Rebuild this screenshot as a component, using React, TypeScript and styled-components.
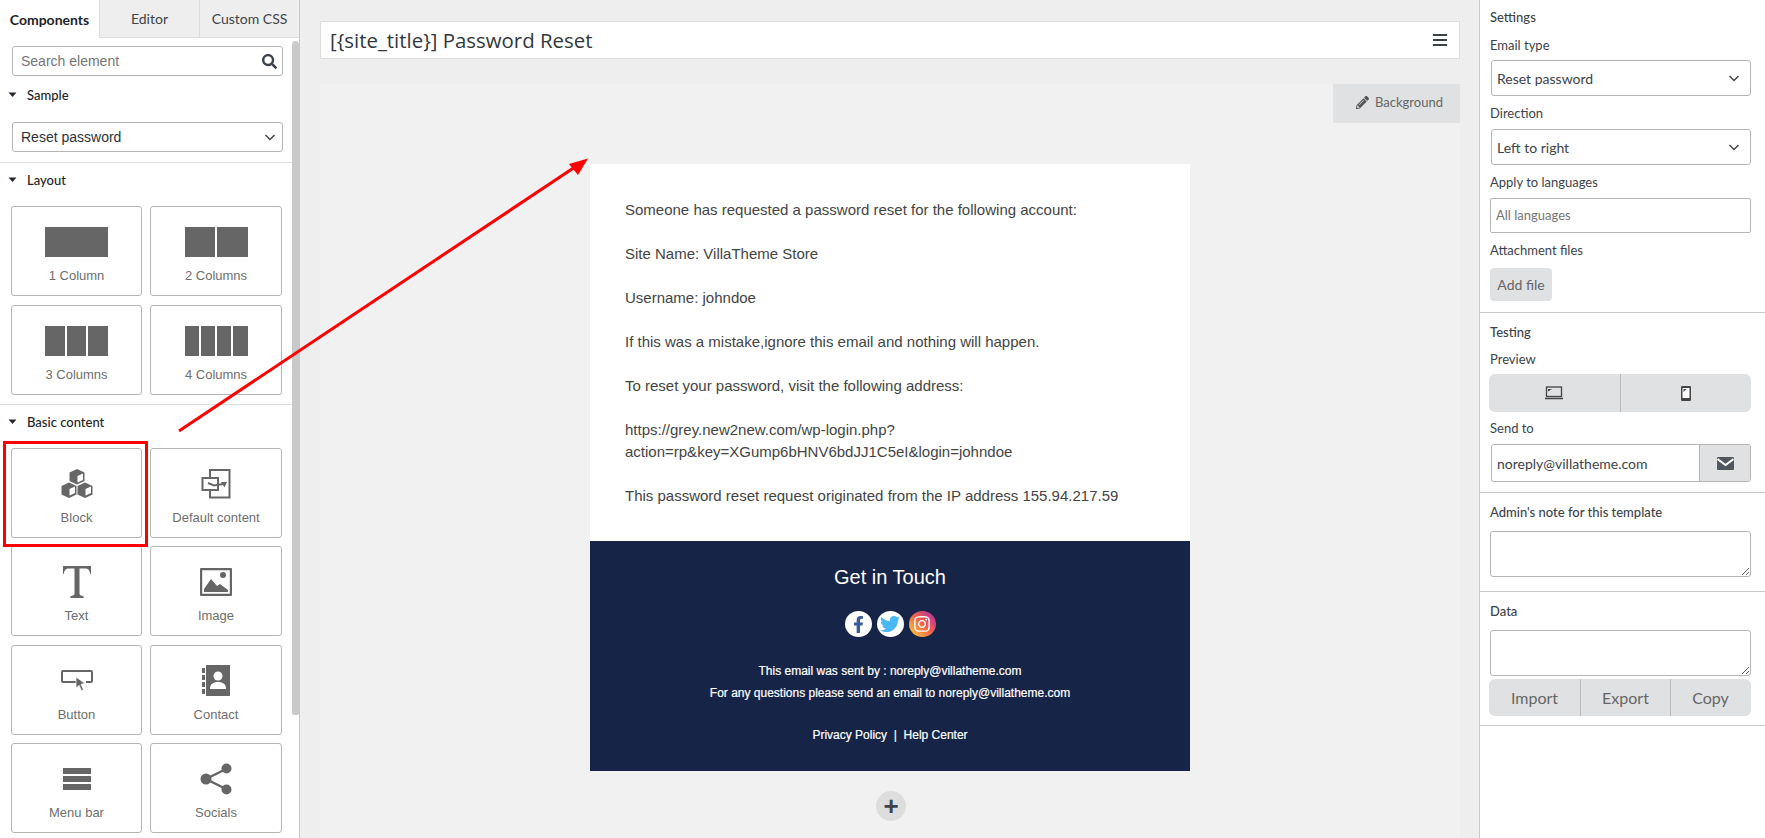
import styled, { createGlobalStyle } from 'styled-components'
import { FaFacebookF, FaInstagram, FaPencilAlt, FaSearch, FaTwitter } from 'react-icons/fa'

const GlobalStyle = createGlobalStyle`
  * { box-sizing: border-box; }
  html, body { margin: 0; padding: 0; height: 100%; overflow: hidden; }
  body { font-family: "Liberation Sans", Arial, sans-serif; color: #3c434a; background: #eee; }
`

const Chevron = () => (
  <svg width="14" height="14" viewBox="0 0 14 14" fill="none" stroke="#444" strokeWidth="1.5">
    <path d="M2.5 5l4.5 4.5L11.500 5" />
  </svg>
)

const Caret = () => (
  <svg width="10" height="6" viewBox="0 0 10 6" fill="#23282d">
    <path d="M0.500 0.500h8L4.500 5z" />
  </svg>
)

const BlockIcon = () => (
  <svg width="32" height="30" viewBox="0 0 32 30">
    <g fill="#666">
      <path d="M16 0l7.500 3.500v8.500L16 15.500l-7.500-3.500V3.500z" />
      <path d="M8 13.500l7.500 3.500v8.500L8 29l-7.500-3.500V17z" />
      <path d="M24 13.500l7.500 3.500v8.500L24 29l-7.500-3.500V17z" />
    </g>
    <g fill="#fff">
      <path d="M16.500 7l5.500-2.500v6.500l-5.500 2.500z" />
      <path d="M8.500 20l5.500-2.500v6.500l-5.500 2.500z" />
      <path d="M24.500 20l5.500-2.500v6.500l-5.500 2.500z" />
    </g>
  </svg>
)

const DefaultContentIcon = () => (
  <svg width="30" height="30" viewBox="0 0 30 30" fill="none" stroke="#666" strokeWidth="2">
    <path d="M9 9V1h19.500v27.500H9v-7" />
    <path d="M1.500 9h15.500v12H1.500z" fill="#fff" />
    <path d="M7 14l6 2.500 9-1.500" />
    <path d="M20 13l6 0-2.500 5.500z" fill="#666" stroke="none" />
  </svg>
)

const TextIcon = () => (
  <svg width="28" height="32" viewBox="0 0 28 32" fill="#666">
    <path d="M0 0h28l.3 8h-1c-.8-4-2-5.500-5.500-5.500h-5.300v25c0 1.600 1 2.300 4 2.500v2H7.500v-2c3-.2 4-.9 4-2.500v-25H6.200C2.700 2.500 1.500 4 .7 8h-1z" />
  </svg>
)

const ImageIcon = () => (
  <svg width="32" height="28" viewBox="0 0 32 28">
    <rect x="1" y="1" width="30" height="26" rx="1" fill="none" stroke="#666" strokeWidth="2.400" />
    <circle cx="23" cy="7" r="3" fill="#666" />
    <path d="M4 24v-3l7-10 6 7 3-2 8 6v2z" fill="#666" />
  </svg>
)

const ButtonIcon = () => (
  <svg width="32" height="22" viewBox="0 0 32 22" fill="none">
    <path d="M16 12H2a1 1 0 0 1-1-1V2a1 1 0 0 1 1-1h28a1 1 0 0 1 1 1v9a1 1 0 0 1-1 1h-5" stroke="#666" strokeWidth="2" />
    <path d="M15 7l9 6.500-4 .8 2.500 5.500-2 .9-2.500-5.500-3 3z" fill="#666" stroke="#fff" strokeWidth=".7" />
  </svg>
)

const ContactIcon = () => (
  <svg width="28" height="32" viewBox="0 0 28 32">
    <path d="M4 0h24v31H4z" fill="#666" />
    <path d="M0 3h3v5H0zM0 10h3v5H0zM0 17h3v5H0zM0 24h3v5H0z" fill="#666" />
    <circle cx="16" cy="11" r="4.500" fill="#fff" />
    <path d="M8 24c0-5 3-7 8-7s8 2 8 7z" fill="#fff" />
  </svg>
)

const MenuBarIcon = () => (
  <svg width="28" height="22" viewBox="0 0 28 22" fill="#666">
    <rect width="28" height="6" />
    <rect y="8" width="28" height="6" />
    <rect y="16" width="28" height="6" />
  </svg>
)

const ShareIcon = () => (
  <svg width="32" height="32" viewBox="0 0 32 32">
    <path d="M26 6L6 16l20 10" fill="none" stroke="#666" strokeWidth="2.500" />
    <circle cx="26.500" cy="5.500" r="5" fill="#666" />
    <circle cx="6" cy="16" r="5.500" fill="#666" />
    <circle cx="26.500" cy="26.500" r="5" fill="#666" />
  </svg>
)

const LaptopIcon = () => (
  <svg width="18" height="14" viewBox="0 0 18 14" fill="none" stroke="#444">
    <rect x="1.500" y="1" width="15" height="9.500" strokeWidth="1.300" />
    <path d="M3 3h4L3 5.500z" fill="#444" stroke="none" />
    <path d="M0 12.500h18" strokeWidth="1.600" />
  </svg>
)

const MobileIcon = () => (
  <svg width="10" height="15" viewBox="0 0 10 15">
    <rect width="10" height="15" rx="1" fill="#444" />
    <rect x="1.500" y="2" width="7" height="10" fill="#fff" />
    <path d="M2.500 3h3l-3 3z" fill="#444" />
  </svg>
)

const MailIcon = () => (
  <svg width="17" height="13" viewBox="0 0 17 13">
    <rect width="17" height="13" rx="1" fill="#50575e" />
    <path d="M0.500 2l8 6 8-6" fill="none" stroke="#fff" strokeWidth="2" />
  </svg>
)

const columns = [
  { label: '1 Column', count: 1 },
  { label: '2 Columns', count: 2 },
  { label: '3 Columns', count: 3 },
  { label: '4 Columns', count: 4 },
]

const basics = [
  { label: 'Block', icon: <BlockIcon /> },
  { label: 'Default content', icon: <DefaultContentIcon /> },
  { label: 'Text', icon: <TextIcon /> },
  { label: 'Image', icon: <ImageIcon /> },
  { label: 'Button', icon: <ButtonIcon /> },
  { label: 'Contact', icon: <ContactIcon /> },
  { label: 'Menu bar', icon: <MenuBarIcon /> },
  { label: 'Socials', icon: <ShareIcon /> },
]

const paragraphs = [
  ['Someone has requested a password reset for the following account:'],
  ['Site Name: VillaTheme Store'],
  ['Username: johndoe'],
  ['If this was a mistake,ignore this email and nothing will happen.'],
  ['To reset your password, visit the following address:'],
  ['https://grey.new2new.com/wp-login.php?', 'action=rp&key=XGump6bHNV6bdJJ1C5eI&login=johndoe'],
  ['This password reset request originated from the IP address 155.94.217.59'],
]

function App() {
  return (
    <Page>
      <GlobalStyle />
      <LeftPanel>
        <Tabs>
          <Tab $active>Components</Tab>
          <Tab>Editor</Tab>
          <Tab>Custom CSS</Tab>
        </Tabs>
        <Scrollbar />
        <LeftBody>
          <SearchBox>
            <span>Search element</span>
            <FaSearch size={15} color="#3c434a" />
          </SearchBox>
          <LeftHeading $top={10}><Caret />Sample</LeftHeading>
          <SampleSelect>
            <span>Reset password</span>
            <Chevron />
          </SampleSelect>
          <LeftDivider />
          <LeftHeading $top={8}><Caret />Layout</LeftHeading>
          <CardGrid $rowGap={9}>
            {columns.map((col) => (
              <Card key={col.label}>
                <ColumnIcon>
                  {Array.from({ length: col.count }).map((_, i) => <i key={i} />)}
                </ColumnIcon>
                <CardLabel>{col.label}</CardLabel>
              </Card>
            ))}
          </CardGrid>
          <LeftDivider $top={9} />
          <LeftHeading $top={8}><Caret />Basic content</LeftHeading>
          <CardGrid $rowGap={8.34}>
            {basics.map((item) => (
              <Card key={item.label}>
                <CardIcon>{item.icon}</CardIcon>
                <CardLabel>{item.label}</CardLabel>
              </Card>
            ))}
          </CardGrid>
        </LeftBody>
      </LeftPanel>

      <Main>
        <TitleBar>
          <TitleText>[{'{'}site_title{'}'}] Password Reset</TitleText>
          <Burger><i /><i /><i /></Burger>
        </TitleBar>
        <Canvas>
          <BackgroundRow>
            <BackgroundButton>
              <FaPencilAlt size={13} color="#555" />
              Background
            </BackgroundButton>
          </BackgroundRow>
          <Email>
            <EmailBody>
              {paragraphs.map((lines) => (
                <p key={lines[0]}>
                  {lines.map((line, i) => <span key={line}>{i > 0 && <br />}{line}</span>)}
                </p>
              ))}
            </EmailBody>
            <EmailFooter>
              <FooterTitle>Get in Touch</FooterTitle>
              <Socials>
                <Social $bg="#fff"><FaFacebookF size={17} color="#3b5998" /></Social>
                <Social $bg="#fff"><FaTwitter size={20} color="#4ab8f5" /></Social>
                <Social $bg="linear-gradient(45deg, #fdc13f 10%, #f5634a 50%, #b5329a 90%)"><FaInstagram size={18} color="#fff" /></Social>
              </Socials>
              <FooterLine>This email was sent by : noreply@villatheme.com</FooterLine>
              <FooterLine>For any questions please send an email to noreply@villatheme.com</FooterLine>
              <FooterLinks>Privacy Policy&nbsp; |&nbsp; Help Center</FooterLinks>
            </EmailFooter>
          </Email>
          <AddRow>+</AddRow>
        </Canvas>
      </Main>

      <RightPanel>
        <Section $top={8} $bottom={11}>
          <Heading>Settings</Heading>
          <FieldLabel $top={10}>Email type</FieldLabel>
          <SelectField $top={6}>Reset password<Chevron /></SelectField>
          <FieldLabel>Direction</FieldLabel>
          <SelectField>Left to right<Chevron /></SelectField>
          <FieldLabel>Apply to languages</FieldLabel>
          <LanguagesField>All languages</LanguagesField>
          <FieldLabel>Attachment files</FieldLabel>
          <AddFile>Add file</AddFile>
        </Section>
        <Section $top={10} $bottom={10}>
          <Heading>Testing</Heading>
          <FieldLabel $top={9}>Preview</FieldLabel>
          <ButtonGroup>
            <GroupButton><LaptopIcon /></GroupButton>
            <GroupButton><MobileIcon /></GroupButton>
          </ButtonGroup>
          <FieldLabel $top={7}>Send to</FieldLabel>
          <SendRow>
            <span>noreply@villatheme.com</span>
            <SendButton><MailIcon /></SendButton>
          </SendRow>
        </Section>
        <Section $top={10} $bottom={14}>
          <Heading>Admin's note for this template</Heading>
          <NoteArea />
        </Section>
        <Section $top={10} $bottom={9}>
          <Heading>Data</Heading>
          <NoteArea />
          <ActionGroup>
            <GroupButton>Import</GroupButton>
            <GroupButton>Export</GroupButton>
            <GroupButton>Copy</GroupButton>
          </ActionGroup>
        </Section>
      </RightPanel>

      <Highlight />
      <Arrow viewBox="0 0 1765 838">
        <path d="M179 431L578 165" stroke="#f00" strokeWidth="3" fill="none" />
        <path d="M588 158.500L569 164l9 11z" fill="#f00" />
      </Arrow>
    </Page>
  )
}

const Page = styled.div`
  position: relative;
  display: flex;
  width: 1765px;
  height: 838px;
  overflow: hidden;
  background: #eee;
`
const LeftPanel = styled.aside`
  position: relative;
  width: 300px;
  flex: none;
  background: #fff;
  border-right: 1px solid #c9c9c9;
  overflow: hidden;
`
const Tabs = styled.div`
  display: flex;
  height: 38px;
  font-family: Lato, sans-serif;
  font-size: 14px;
`
const Tab = styled.div<{ $active?: boolean }>`
  flex: 1;
  display: flex;
  align-items: center;
  justify-content: center;
  background: ${(p) => (p.$active ? '#fff' : '#eee')};
  color: ${(p) => (p.$active ? '#1d2327' : '#3c434a')};
  font-weight: ${(p) => (p.$active ? 700 : 400)};
  border-left: ${(p) => (p.$active ? 'none' : '1px solid #ddd')};
  border-bottom: ${(p) => (p.$active ? 'none' : '1px solid #ddd')};
`
const Scrollbar = styled.div`
  position: absolute;
  top: 41px;
  right: 0;
  width: 7px;
  height: 674px;
  background: #c9c9c9;
  border-radius: 4px 4px 3px 3px;
`
const LeftBody = styled.div`
  width: 292px;
  padding-top: 8px;
`
const inputBox = `
  display: flex;
  align-items: center;
  justify-content: space-between;
  border: 1px solid #b5b5b5;
  border-radius: 3px;
`
const SearchBox = styled.div`
  ${inputBox}
  width: 271px;
  height: 30px;
  margin-left: 12px;
  padding: 0 5px 0 8px;
  font-size: 14px;
  color: #757575;
`
const SampleSelect = styled.div`
  ${inputBox}
  width: 271px;
  height: 30px;
  margin: 18px 0 10px 12px;
  padding: 0 5px 0 8px;
  font-size: 14px;
  color: #2c3338;
`
const LeftHeading = styled.div<{ $top: number }>`
  display: flex;
  align-items: center;
  gap: 9px;
  height: 18px;
  margin-top: ${(p) => p.$top}px;
  padding-left: 8px;
  font-family: Lato, sans-serif;
  font-size: 13px;
  font-weight: 500;
  color: #1d2327;
`
const LeftDivider = styled.div<{ $top?: number }>`
  height: 1px;
  margin-top: ${(p) => p.$top ?? 0}px;
  background: #ddd;
`
const CardGrid = styled.div<{ $rowGap: number }>`
  display: grid;
  grid-template-columns: 131px 132px;
  grid-auto-rows: 90px;
  column-gap: 8px;
  row-gap: ${(p) => p.$rowGap}px;
  margin: 17px 0 0 11px;
`
const Card = styled.div`
  display: flex;
  flex-direction: column;
  align-items: center;
  background: #fff;
  border: 1px solid #b5b5b5;
  border-radius: 3px;
`
const CardIcon = styled.div`
  display: flex;
  align-items: center;
  justify-content: center;
  height: 30px;
  margin-top: 20px;
`
const ColumnIcon = styled.div`
  display: flex;
  gap: 2px;
  width: 63px;
  height: 30px;
  margin-top: 20px;
  i {
    flex: 1;
    background: #666;
  }
`
const CardLabel = styled.div`
  margin-top: 11px;
  font-size: 13px;
  line-height: 16px;
  color: #6e6e6e;
`
const Main = styled.main`
  flex: 1;
  display: flex;
  flex-direction: column;
  padding: 21px 19px 0 20px;
  min-width: 0;
`
const TitleBar = styled.div`
  display: flex;
  align-items: center;
  justify-content: space-between;
  height: 38px;
  flex: none;
  padding: 0 12px 0 9px;
  background: #fff;
  border: 1px solid #ddd;
`
const TitleText = styled.div`
  font-family: "Open Sans", sans-serif;
  font-size: 20.4px;
  color: #32373c;
`
const Burger = styled.div`
  display: flex;
  flex-direction: column;
  gap: 3px;
  width: 14px;
  i {
    height: 2px;
    background: #3c434a;
  }
`
const Canvas = styled.div`
  flex: 1;
  margin-top: 25px;
  background: #f1f1f1;
  min-height: 0;
`
const BackgroundRow = styled.div`
  display: flex;
  justify-content: flex-end;
  height: 80px;
`
const BackgroundButton = styled.div`
  display: flex;
  align-items: center;
  justify-content: center;
  gap: 6px;
  width: 127px;
  height: 39px;
  padding: 0 0 3px 6px;
  background: #e0e1e3;
  font-family: Lato, sans-serif;
  font-size: 13px;
  color: #666;
`
const Email = styled.div`
  width: 600px;
  margin-left: 270px;
`
const EmailBody = styled.div`
  height: 377px;
  padding: 35px 35px 0;
  background: #fff;
  font-size: 15px;
  line-height: 22px;
  color: #444;
  p {
    margin: 0 0 22px;
  }
`
const EmailFooter = styled.div`
  height: 230px;
  padding-top: 24px;
  background: #162447;
  color: #fff;
  text-align: center;
`
const FooterTitle = styled.div`
  font-size: 20px;
  line-height: 24px;
`
const Socials = styled.div`
  display: flex;
  justify-content: center;
  gap: 5px;
  margin: 22px 0 23px;
`
const Social = styled.div<{ $bg: string }>`
  display: flex;
  align-items: center;
  justify-content: center;
  width: 27px;
  height: 26px;
  border-radius: 50%;
  background: ${(p) => p.$bg};
`
const FooterLine = styled.div`
  font-size: 12px;
  line-height: 22px;
  -webkit-text-stroke: 0.2px #fff;
`
const FooterLinks = styled(FooterLine)`
  margin-top: 20px;
`
const AddRow = styled.div`
  display: flex;
  align-items: center;
  justify-content: center;
  width: 30px;
  height: 30px;
  margin: 20px 0 0 556px;
  border-radius: 50%;
  background: #ddd;
  font-size: 26px;
  font-weight: 700;
  color: #3c434a;
`
const RightPanel = styled.aside`
  width: 286px;
  flex: none;
  background: #fff;
  border-left: 1px solid #c9c9c9;
  font-family: Lato, sans-serif;
`
const Section = styled.section<{ $top: number; $bottom: number }>`
  padding: ${(p) => p.$top}px 14px ${(p) => p.$bottom}px 10px;
  border-bottom: 1px solid #c9c9c9;
`
const Heading = styled.div`
  font-size: 13px;
  font-weight: 500;
  line-height: 18px;
  color: #3c434a;
`
const FieldLabel = styled.div<{ $top?: number }>`
  margin-top: ${(p) => p.$top ?? 8}px;
  font-size: 13px;
  line-height: 18px;
  color: #3c434a;
`
const SelectField = styled.div<{ $top?: number }>`
  ${inputBox}
  height: 36px;
  margin: ${(p) => p.$top ?? 7}px 0 0 1px;
  padding: 0 9px 0 5px;
  font-size: 14px;
  color: #3c434a;
`
const LanguagesField = styled.div`
  ${inputBox}
  height: 35px;
  margin-top: 7px;
  padding: 0 5px 2px;
  border-radius: 2px;
  font-size: 13px;
  color: #757575;
`
const AddFile = styled.div`
  display: flex;
  align-items: center;
  justify-content: center;
  width: 62px;
  height: 33px;
  margin-top: 9px;
  border-radius: 4px;
  background: #e0e1e3;
  font-size: 14px;
  color: #666;
`
const ButtonGroup = styled.div`
  display: flex;
  height: 38px;
  margin: 6px 0 0 -1px;
  border-radius: 6px;
  overflow: hidden;
  background: #e0e1e3;
`
const GroupButton = styled.div`
  flex: 1;
  display: flex;
  align-items: center;
  justify-content: center;
  font-size: 16px;
  color: #666;
  & + & {
    border-left: 1px solid #bcbcbc;
  }
`
const ActionGroup = styled(ButtonGroup)`
  display: grid;
  grid-template-columns: 91px 90px 80px;
  height: 37px;
  margin-top: 3px;
`
const SendRow = styled.div`
  ${inputBox}
  height: 38px;
  margin: 7px 0 0 1px;
  padding-left: 5px;
  font-size: 14px;
  color: #3c434a;
  overflow: hidden;
`
const SendButton = styled.div`
  display: flex;
  align-items: center;
  justify-content: center;
  width: 51px;
  height: 100%;
  background: #e0e1e3;
  border-left: 1px solid #b5b5b5;
`
const NoteArea = styled.textarea`
  display: block;
  width: 100%;
  height: 46px;
  margin-top: 10px;
  background: #fff;
  border: 1px solid #b5b5b5;
  border-radius: 3px;
  outline: none;
`
const Highlight = styled.div`
  position: absolute;
  left: 3px;
  top: 441px;
  width: 145px;
  height: 106px;
  border: 3px solid #f00;
  pointer-events: none;
`
const Arrow = styled.svg`
  position: absolute;
  left: 0;
  top: 0;
  width: 1765px;
  height: 838px;
  pointer-events: none;
`

export default App
